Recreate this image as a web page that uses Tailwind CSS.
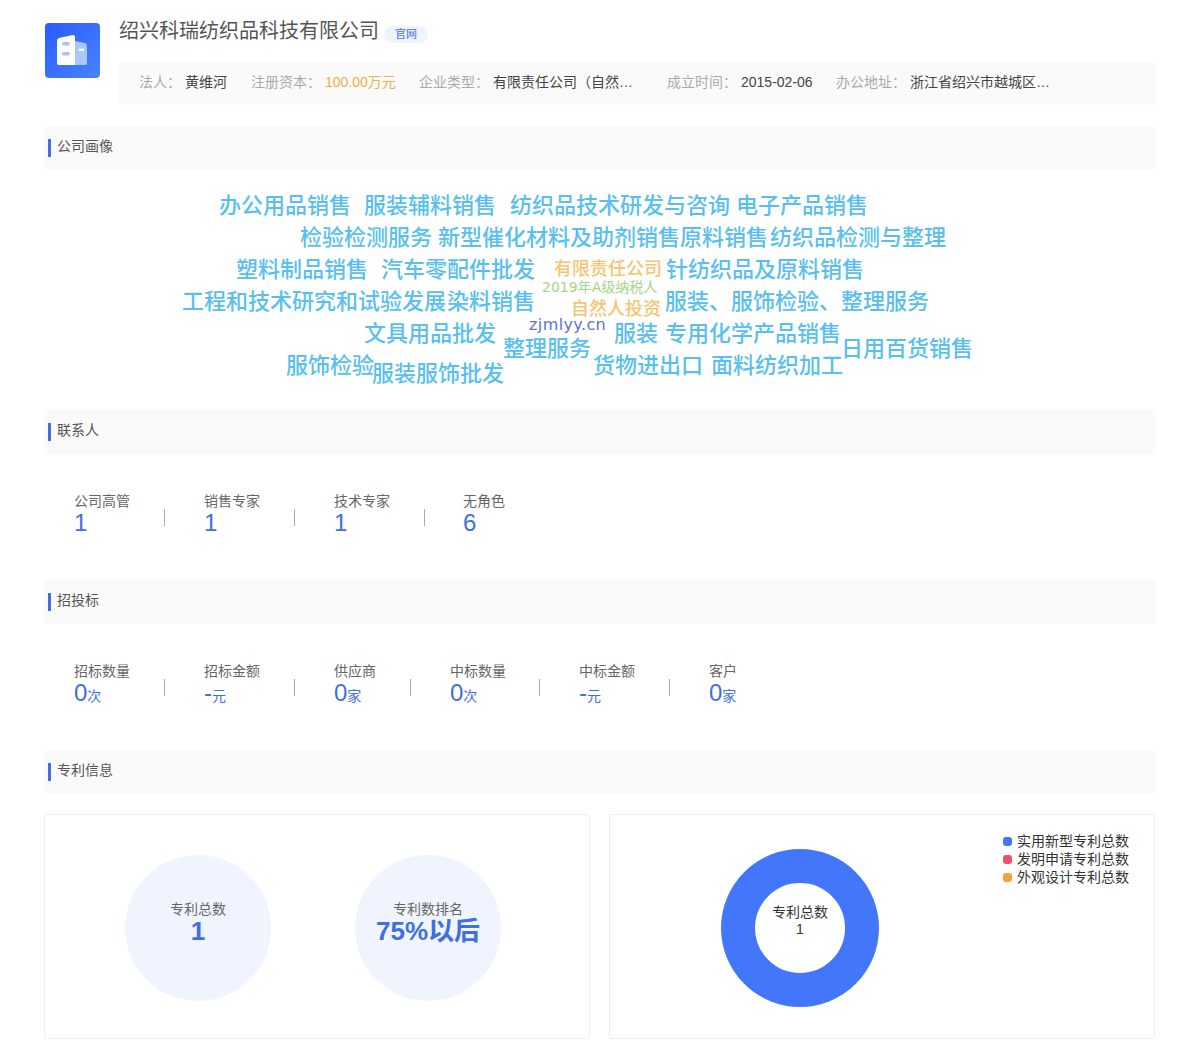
<!DOCTYPE html>
<html lang="en">
<head>
    <meta charset="UTF-8">
    <meta name="viewport" content="width=device-width, initial-scale=1.0">
    <script src="https://cdn.jsdelivr.net/npm/@tailwindcss/browser@4"></script>
    <title>绍兴科瑞纺织品科技有限公司</title>
</head>
<body class="bg-white px-[44px] w-[1200px] font-['Liberation_Sans','Noto_Sans_CJK_SC',sans-serif] text-sm text-[#666]">

    <!-- Company header -->
    <div class="flex h-[126px]">
        <div class="w-[55px] h-[55px] ml-px mt-[23px] rounded-[4px] bg-gradient-to-br from-[#2a5bff] to-[#4a82fb] shrink-0">
            <svg class="w-[55px] h-[55px]" viewBox="0 0 55 55">
                <path d="M30 18 L40 20 Q42 20.500 42 23 V40 Q42 42 40 42 H30 Z" fill="#a9c6fd" />
                <path d="M14 15 L28 12 Q30 12 30 14 V42 H14 Q12 42 12 40 V18 Q12 15.500 14 15 Z" fill="#fff" />
                <rect x="17" y="19" width="8" height="3.500" rx="1.750" fill="#a9c1fb" />
                <rect x="17" y="29" width="8" height="3.500" rx="1.750" fill="#a9c1fb" />
                <rect x="33.500" y="25.500" width="5.500" height="2.500" rx="1.250" fill="#fff" />
            </svg>
        </div>
        <div class="ml-[19px] w-[1037px]">
            <div class="flex items-center h-[62px]">
                <h1 class="text-[20px] leading-[24px] font-normal text-[#555]">绍兴科瑞纺织品科技有限公司</h1>
                <span class="ml-[5px] mt-[7px] w-[44px] h-[17px] rounded-full bg-[#eef3fd] text-[#3f72e4] text-[11px] leading-[17px] text-center">官网</span>
            </div>
            <div class="flex items-center h-[43px] pl-[20px] pb-[4px] bg-[#fafafa] whitespace-nowrap">
                <span class="text-[#aaa] w-[46px]">法人：</span><span class="text-[#444] w-[42px] mr-[24px]">黄维河</span>
                <span class="text-[#aaa] w-[74px]">注册资本：</span><span class="text-[#eeb04a] w-[71px] mr-[23px]">100.00万元</span>
                <span class="text-[#aaa] w-[74px]">企业类型：</span><span class="text-[#444] w-[150px] mr-[24px]">有限责任公司（自然…</span>
                <span class="text-[#aaa] w-[74px]">成立时间：</span><span class="text-[#444] w-[71px] mr-[24px]">2015-02-06</span>
                <span class="text-[#aaa] w-[74px]">办公地址：</span><span class="text-[#444]">浙江省绍兴市越城区…</span>
            </div>
        </div>
    </div>

    <!-- 公司画像 -->
    <div class="flex items-center h-[44px] bg-[#fafafa] pl-[4px]">
        <i class="w-[3px] h-[18px] bg-[#3f6fe0] mr-[6px]"></i><span class="text-[#555] leading-[18px] -mt-[5px]">公司画像</span>
    </div>
    <div class="relative h-[240px] -mx-[44px] font-['DejaVu_Sans','Noto_Sans_CJK_SC',sans-serif] font-medium text-[22px] leading-[32px] text-[#58bff0] whitespace-nowrap">
        <span class="absolute left-[219px] top-[20px]">办公用品销售</span>
        <span class="absolute left-[364px] top-[20px]">服装辅料销售</span>
        <span class="absolute left-[510px] top-[20px]">纺织品技术研发与咨询</span>
        <span class="absolute left-[736px] top-[20px]">电子产品销售</span>
        <span class="absolute left-[300px] top-[52px]">检验检测服务</span>
        <span class="absolute left-[438px] top-[52px]">新型催化材料及助剂销售</span>
        <span class="absolute left-[680px] top-[52px]">原料销售</span>
        <span class="absolute left-[770px] top-[52px]">纺织品检测与整理</span>
        <span class="absolute left-[236px] top-[84px]">塑料制品销售</span>
        <span class="absolute left-[381px] top-[84px]">汽车零配件批发</span>
        <span class="absolute left-[554px] top-[83px] text-[18px] text-[#f5c56f]">有限责任公司</span>
        <span class="absolute left-[666px] top-[84px]">针纺织品及原料销售</span>
        <span class="absolute left-[182px] top-[116px]">工程和技术研究和试验发展</span>
        <span class="absolute left-[447px] top-[116px]">染料销售</span>
        <span class="absolute left-[542px] top-[109px] text-[14px] leading-[16px] font-normal text-[#a6d48e]">2019年A级纳税人</span>
        <span class="absolute left-[571px] top-[130px] text-[18px] leading-[18px] text-[#f5c56f]">自然人投资</span>
        <span class="absolute left-[665px] top-[116px]">服装、服饰检验、整理服务</span>
        <span class="absolute left-[364px] top-[148px]">文具用品批发</span>
        <span class="absolute left-[529px] top-[148px] text-[16px] leading-[14px] tracking-[0.4px] font-normal text-[#5a72dc]">zjmlyy.cn</span>
        <span class="absolute left-[614px] top-[148px]">服装</span>
        <span class="absolute left-[665px] top-[148px]">专用化学产品销售</span>
        <span class="absolute left-[503px] top-[163px]">整理服务</span>
        <span class="absolute left-[841px] top-[163px]">日用百货销售</span>
        <span class="absolute left-[286px] top-[180px]">服饰检验</span>
        <span class="absolute left-[593px] top-[180px]">货物进出口</span>
        <span class="absolute left-[711px] top-[180px]">面料纺织加工</span>
        <span class="absolute left-[372px] top-[188px]">服装服饰批发</span>
    </div>

    <!-- 联系人 -->
    <div class="flex items-center h-[44px] bg-[#fafafa] pl-[4px]">
        <i class="w-[3px] h-[18px] bg-[#3f6fe0] mr-[6px]"></i><span class="text-[#555] leading-[18px] -mt-[5px]">联系人</span>
    </div>
    <div class="flex h-[126px] pl-[30px] pt-[39px]">
        <div class="w-[90px]">
            <div class="leading-[16px]">公司高管</div>
            <div class="text-[24px] leading-[28px] text-[#3f6fe0]">1</div>
        </div>
        <i class="w-px h-[17px] bg-[#aaa] mt-[16px] mr-[39px]"></i>
        <div class="w-[90px]">
            <div class="leading-[16px]">销售专家</div>
            <div class="text-[24px] leading-[28px] text-[#3f6fe0]">1</div>
        </div>
        <i class="w-px h-[17px] bg-[#aaa] mt-[16px] mr-[39px]"></i>
        <div class="w-[90px]">
            <div class="leading-[16px]">技术专家</div>
            <div class="text-[24px] leading-[28px] text-[#3f6fe0]">1</div>
        </div>
        <i class="w-px h-[17px] bg-[#aaa] mt-[16px] mr-[38px]"></i>
        <div>
            <div class="leading-[16px]">无角色</div>
            <div class="text-[24px] leading-[28px] text-[#3f6fe0]">6</div>
        </div>
    </div>

    <!-- 招投标 -->
    <div class="flex items-center h-[44px] bg-[#fafafa] pl-[4px]">
        <i class="w-[3px] h-[18px] bg-[#3f6fe0] mr-[6px]"></i><span class="text-[#555] leading-[18px] -mt-[5px]">招投标</span>
    </div>
    <div class="flex h-[126px] pl-[30px] pt-[39px]">
        <div class="w-[90px]">
            <div class="leading-[16px]">招标数量</div>
            <div class="text-[#3f6fe0] leading-[28px]"><span class="text-[24px]">0</span>次</div>
        </div>
        <i class="w-px h-[17px] bg-[#aaa] mt-[16px] mr-[39px]"></i>
        <div class="w-[90px]">
            <div class="leading-[16px]">招标金额</div>
            <div class="text-[#3f6fe0] leading-[28px]"><span class="text-[24px]">-</span>元</div>
        </div>
        <i class="w-px h-[17px] bg-[#aaa] mt-[16px] mr-[39px]"></i>
        <div class="w-[76px]">
            <div class="leading-[16px]">供应商</div>
            <div class="text-[#3f6fe0] leading-[28px]"><span class="text-[24px]">0</span>家</div>
        </div>
        <i class="w-px h-[17px] bg-[#aaa] mt-[16px] mr-[39px]"></i>
        <div class="w-[89px]">
            <div class="leading-[16px]">中标数量</div>
            <div class="text-[#3f6fe0] leading-[28px]"><span class="text-[24px]">0</span>次</div>
        </div>
        <i class="w-px h-[17px] bg-[#aaa] mt-[16px] mr-[39px]"></i>
        <div class="w-[90px]">
            <div class="leading-[16px]">中标金额</div>
            <div class="text-[#3f6fe0] leading-[28px]"><span class="text-[24px]">-</span>元</div>
        </div>
        <i class="w-px h-[17px] bg-[#aaa] mt-[16px] mr-[39px]"></i>
        <div>
            <div class="leading-[16px]">客户</div>
            <div class="text-[#3f6fe0] leading-[28px]"><span class="text-[24px]">0</span>家</div>
        </div>
    </div>

    <!-- 专利信息 -->
    <div class="flex items-center h-[44px] bg-[#fafafa] pl-[4px]">
        <i class="w-[3px] h-[18px] bg-[#3f6fe0] mr-[6px]"></i><span class="text-[#555] leading-[18px] -mt-[5px]">专利信息</span>
    </div>
    <div class="flex gap-[19px] mt-[20px]">
        <div class="flex gap-[84px] w-[546px] h-[225px] border border-[#eee] rounded-[3px] pl-[80px] pt-[40px]">
            <div class="w-[146px] h-[146px] rounded-full bg-[#eff4fe] flex flex-col items-center pt-[46px]">
                <div class="leading-[16px] text-[#666]">专利总数</div>
                <div class="text-[26px] leading-[28px] font-bold text-[#3f6fe0]">1</div>
            </div>
            <div class="w-[146px] h-[146px] rounded-full bg-[#eff4fe] flex flex-col items-center pt-[46px]">
                <div class="leading-[16px] text-[#666]">专利数排名</div>
                <div class="text-[26px] leading-[28px] font-bold text-[#3f6fe0]">75%以后</div>
            </div>
        </div>
        <div class="relative w-[546px] h-[225px] border border-[#eee] rounded-[3px] pl-[111px] pt-[34px]">
            <div class="w-[158px] h-[158px] rounded-full border-[34px] border-[#4277fb] flex flex-col items-center justify-center pb-[14px] text-[#333]">
                <div class="leading-[17px]">专利总数</div>
                <div class="leading-[17px]">1</div>
            </div>
            <!-- legend -->
            <div class="absolute right-[25px] top-[17px] text-[#333] leading-[18px]">
                <div class="flex items-center gap-[5px]"><i class="w-[9px] h-[9px] rounded-[3px] bg-[#4277fb]"></i>实用新型专利总数</div>
                <div class="flex items-center gap-[5px]"><i class="w-[9px] h-[9px] rounded-[3px] bg-[#f0506e]"></i>发明申请专利总数</div>
                <div class="flex items-center gap-[5px]"><i class="w-[9px] h-[9px] rounded-[3px] bg-[#f7a03c]"></i>外观设计专利总数</div>
            </div>
        </div>
    </div>

</body>
</html>
